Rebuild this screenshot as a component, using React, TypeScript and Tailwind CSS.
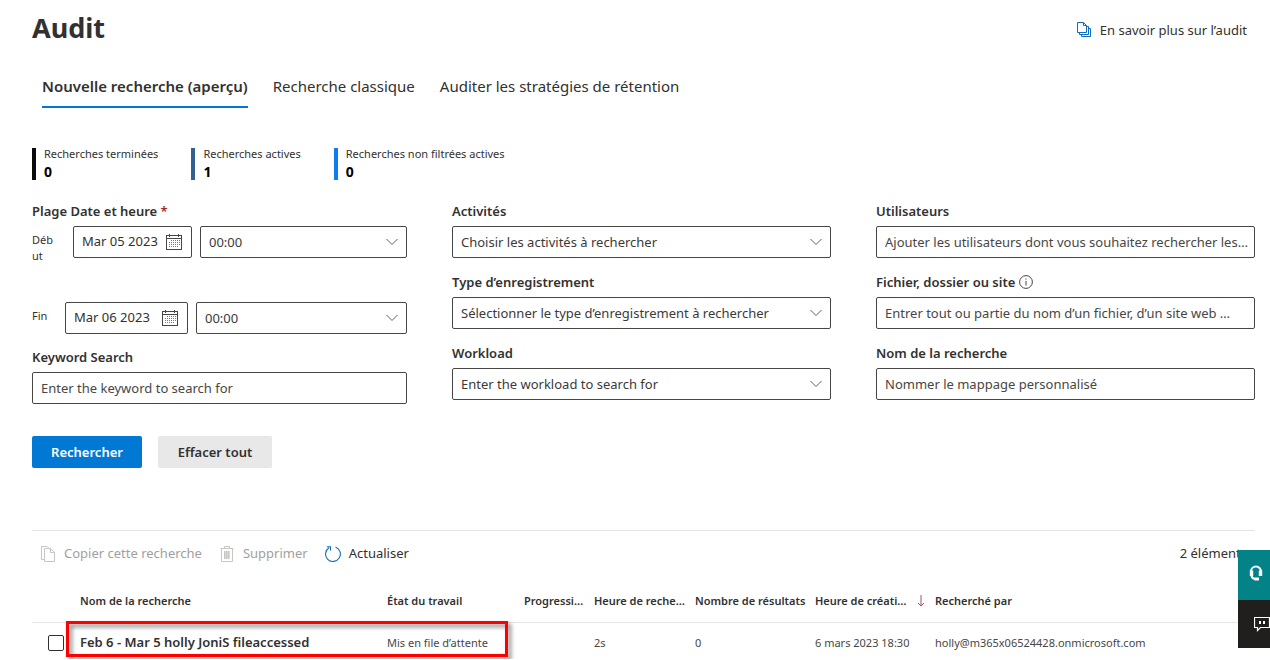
import type { ReactNode } from "react";

const control =
  "h-8 w-full min-w-0 rounded-xs border border-[#484644] bg-white pl-2 text-[13px] text-[#3b3a39] placeholder:text-[#484644] placeholder:opacity-100 text-ellipsis";

const labelText = "text-[13px] leading-5 font-semibold text-[#323130]";

function Chevron() {
  return (
    <svg className="pointer-events-none absolute top-2.5 right-[9px] h-3 w-3" viewBox="0 0 12 12" fill="none" stroke="#605e5c" aria-hidden="true">
      <path d="M0.5 3L6 8.5L11.5 3" />
    </svg>
  );
}

function Calendar() {
  return (
    <svg className="h-4 w-4 shrink-0" viewBox="0 0 16 16" fill="none" stroke="#484644" shapeRendering="crispEdges" aria-hidden="true">
      <path d="M0.5 1.5H15.5V15.5H0.5Z M0.5 4.5H15.5 M3.5 0V3 M12.5 0V3" />
      <path
        d="M5 6.5H14 M3 8.5H14 M3 10.5H14 M3 12.5H12"
        stroke="#797775"
        strokeDasharray="1 1"
      />
    </svg>
  );
}

function Select({ id, value, label }: { id: string; value: string; label?: string }) {
  return (
    <div className="relative min-w-0 flex-1">
      <select id={id} aria-label={label} className={`${control} appearance-none pt-0.5 pr-7`}>
        <option>{value}</option>
      </select>
      <Chevron />
    </div>
  );
}

function Field({ id, label, extra, children }: { id: string; label: string; extra?: ReactNode; children: ReactNode }) {
  return (
    <div className="flex flex-col gap-[5px]">
      <div className="flex items-center gap-1">
        <label htmlFor={id} className={labelText}>
          {label}
        </label>
        {extra}
      </div>
      <div className="flex">{children}</div>
    </div>
  );
}

function DateInput({ id, value }: { id: string; value: string }) {
  return (
    <div className="flex h-8 min-w-0 items-center rounded-xs border border-[#484644] pr-[9px] pl-2">
      <input id={id} defaultValue={value} className="w-0 min-w-0 flex-1 text-[13px] text-[#323130]" />
      <Calendar />
    </div>
  );
}

function Stat({ label, value, bar }: { label: string; value: string; bar: string }) {
  return (
    <div className={`h-8 border-l-4 pl-2 ${bar}`}>
      <dt className="text-[11px] leading-3 text-[#323130]">{label}</dt>
      <dd className="pt-0.5 text-sm leading-5 font-bold text-black">{value}</dd>
    </div>
  );
}

const stats = [
  { label: "Recherches terminées", value: "0", bar: "border-[#0b0b0b]" },
  { label: "Recherches actives", value: "1", bar: "border-[#32608f]" },
  { label: "Recherches non filtrées actives", value: "0", bar: "border-[#0f7cec]" },
];

export default function App() {
  return (
    <div className="relative overflow-hidden bg-white pr-[15px] pl-8 font-['Noto_Sans','Open_Sans',sans-serif] text-[#323130]">
      <header className="flex h-[60px] items-center justify-between pr-2">
        <h1 className="pb-1 text-[27px] leading-9 font-bold">Audit</h1>
        <a href="#savoir" className="flex items-center gap-2 text-[13px] leading-5">
          <svg className="h-4 w-4" viewBox="0 0 16 16" fill="none" stroke="#0f6cbd" aria-hidden="true">
            <path d="M1.5 0.5H7.5L10.5 3.5V10.5H1.5Z M7.5 0.5V3.5H10.5 M3.5 10.5V12.5H12.5V4.5H10.5 M5.5 12.5V14.5H14.5V6.5H12.5" />
          </svg>
          En savoir plus sur l’audit
        </a>
      </header>

      <nav className="flex h-12 items-stretch gap-[25px] pl-2.5 text-[15px] leading-[22px]">
        <a href="#nouvelle" aria-current="page" className="border-b-2 border-[#0078d4] pt-[15px] font-semibold">
          Nouvelle recherche (aperçu)
        </a>
        <a href="#classique" className="pt-[15px]">
          Recherche classique
        </a>
        <a href="#retention" className="pt-[15px]">
          Auditer les stratégies de rétention
        </a>
      </nav>

      <dl className="flex gap-[33px] pt-10">
        {stats.map((s) => (
          <Stat key={s.label} {...s} />
        ))}
      </dl>

      <form onSubmit={(e) => e.preventDefault()} className="pt-[21px]">
        <div className="grid grid-cols-[minmax(0,375fr)_minmax(0,379fr)_minmax(0,379fr)] gap-x-[45px]">
          <div>
            <fieldset>
              <legend className={labelText}>
                Plage Date et heure <span className="text-[#a4262c]">*</span>
              </legend>
              <div className="mt-[5px] grid h-[76px] grid-cols-[33px_119px_minmax(0,1fr)] gap-2">
                <label htmlFor="debut" className="w-6 pt-1.5 text-[11px] leading-4 break-all">
                  Début
                </label>
                <DateInput id="debut" value="Mar 05 2023" />
                <Select id="debut-heure" label="Heure de début" value="00:00" />
              </div>
              <div className="grid grid-cols-[25px_123px_minmax(0,1fr)] gap-2 pb-[13px]">
                <label htmlFor="fin" className="pt-1.5 text-[11px] leading-4">
                  Fin
                </label>
                <DateInput id="fin" value="Mar 06 2023" />
                <Select id="fin-heure" label="Heure de fin" value="00:00" />
              </div>
            </fieldset>
            <Field id="keyword" label="Keyword Search">
              <input id="keyword" placeholder="Enter the keyword to search for" className={`${control} pr-2`} />
            </Field>
          </div>

          <div className="flex flex-col gap-[14px]">
            <Field id="activites" label="Activités">
              <Select id="activites" value="Choisir les activités à rechercher" />
            </Field>
            <Field id="type" label="Type d’enregistrement">
              <Select id="type" value="Sélectionner le type d’enregistrement à rechercher" />
            </Field>
            <Field id="workload" label="Workload">
              <Select id="workload" value="Enter the workload to search for" />
            </Field>
          </div>

          <div className="flex flex-col gap-[14px]">
            <Field id="utilisateurs" label="Utilisateurs">
              <input
                id="utilisateurs"
                placeholder="Ajouter les utilisateurs dont vous souhaitez rechercher les journaux"
                className={`${control} pr-1`}
              />
            </Field>
            <Field
              id="fichier"
              label="Fichier, dossier ou site"
              extra={
                <svg className="h-3.5 w-3.5" viewBox="0 0 14 14" fill="none" stroke="#484644" aria-hidden="true">
                  <circle cx="7" cy="7" r="6.4" />
                  <path d="M7 3.5V4.7 M7 6V10.5" />
                </svg>
              }
            >
              <input
                id="fichier"
                placeholder="Entrer tout ou partie du nom d’un fichier, d’un site web ou d’un dossier"
                className={`${control} pr-5`}
              />
            </Field>
            <Field id="nom" label="Nom de la recherche">
              <input id="nom" placeholder="Nommer le mappage personnalisé" className={`${control} pr-2`} />
            </Field>
          </div>
        </div>

        <div className="flex gap-4 pt-8 text-[13px] font-semibold">
          <button type="submit" className="h-8 w-[110px] rounded-xs bg-[#0078d4] pt-0.5 text-white">
            Rechercher
          </button>
          <button type="reset" className="h-8 w-[114px] rounded-xs bg-[#e8e8e8] pt-0.5">
            Effacer tout
          </button>
        </div>
      </form>

      <section className="mt-[62px] border-t border-[#e5e5e5]">
        <div className="flex h-[46px] items-center justify-between pr-2 pl-2 text-[13px]">
          <div className="flex gap-[17px]">
            <button disabled className="flex items-center gap-2 text-[#a19f9d]">
              <svg className="h-4 w-4" viewBox="0 0 16 16" fill="none" stroke="#c8c6c4" aria-hidden="true">
                <path d="M4.5 13.5H1.5V0.5H7L9.5 3" />
                <path d="M4.5 2.5H10.5L14.5 6.5V15.5H4.5Z M10.5 2.5V6.5H14.5" />
              </svg>
              Copier cette recherche
            </button>
            <button disabled className="flex items-center gap-2 text-[#a19f9d]">
              <svg className="h-4 w-4" viewBox="0 0 16 16" fill="none" stroke="#c8c6c4" aria-hidden="true">
                <path d="M1.5 2.5H14.5 M5.5 2.5V0.5H10.5V2.5 M2.5 2.5V15.5H13.5V2.5" />
                <path d="M5 5H11V13H5Z" fill="#dddbd9" stroke="none" />
                <path d="M5.5 5V13 M7.5 5V13 M9.5 5V13" />
              </svg>
              Supprimer
            </button>
            <button className="flex items-center gap-2">
              <svg className="h-4 w-4" viewBox="0 0 16 16" fill="none" stroke="#0f6cbd" strokeWidth="1.1" aria-hidden="true">
                <path d="M10.5 1.1A7.4 7.4 0 1 1 4 1.8 M1.8 0.8H5.5V4.5" />
              </svg>
              Actualiser
            </button>
          </div>
          <span>2 éléments</span>
        </div>

        <div className="relative">
          <table className="w-full table-fixed text-left">
            <colgroup>
              <col className="w-10" />
              <col className="w-[307px]" />
              <col className="w-[137px]" />
              <col className="w-[70px]" />
              <col className="w-[101px]" />
              <col className="w-[120px]" />
              <col className="w-[120px]" />
              <col />
            </colgroup>
            <thead>
              <tr className="h-[45px] border-b border-[#e5e5e5] text-[11px] [&>th]:truncate [&>th]:pt-1 [&>th]:pl-2 [&>th]:font-semibold">
                <th aria-label="Sélection" />
                <th>Nom de la recherche</th>
                <th>État du travail</th>
                <th>Progression</th>
                <th>Heure de recherche</th>
                <th>Nombre de résultats</th>
                <th aria-sort="descending">
                  <span className="flex items-center gap-2">
                    <span className="w-[94px] truncate">Heure de création</span>
                    <svg className="h-3 w-2 shrink-0" viewBox="0 0 8 12" fill="none" stroke="#a4525a" aria-hidden="true">
                      <path d="M4 0V11 M1 8L4 11L7 8" />
                    </svg>
                  </span>
                </th>
                <th>Recherché par</th>
              </tr>
            </thead>
            <tbody>
              <tr className="h-[37px] text-[11px] text-[#484644] [&>td]:pt-1 [&>td]:pl-2 [&>td]:whitespace-nowrap">
                <td>
                  <input
                    type="checkbox"
                    aria-label="Sélectionner la ligne"
                    className="ml-2 block h-4 w-4 appearance-none rounded-xs border border-[#323130] bg-white"
                  />
                </td>
                <td className="text-[13px] font-semibold text-[#323130]">Feb 6 - Mar 5 holly JoniS fileaccessed</td>
                <td>Mis en file d’attente</td>
                <td />
                <td>2s</td>
                <td>0</td>
                <td>6 mars 2023 18:30</td>
                <td>holly@m365x06524428.onmicrosoft.com</td>
              </tr>
            </tbody>
          </table>
          <div className="pointer-events-none absolute top-11 left-[34px] h-9 w-[442px] border-3 border-[#fe0000] drop-shadow-[3px_3px_2px_rgba(0,0,0,0.5)]" />
        </div>
      </section>

      <aside className="absolute top-[550px] right-0 w-8">
        <button aria-label="Aide" className="flex h-[50px] w-8 items-center justify-center bg-[#038387] pb-1 pl-1">
          <svg className="h-4 w-4" viewBox="0 0 16 16" fill="none" stroke="white" strokeWidth="2" aria-hidden="true">
            <path d="M3 8V6.5A5 5 0 0 1 13 6.5V8" />
            <path d="M3.5 5.5V11 M12.5 5.5V11" strokeWidth="3.4" />
            <path d="M3.5 10.5Q4 14 8 14" strokeWidth="2" />
            <path d="M6.5 14H11" strokeWidth="3" />
          </svg>
        </button>
        <button aria-label="Commentaires" className="flex h-12 w-8 items-center overflow-hidden bg-[#201f1e] pl-4">
          <svg className="h-4 w-4 shrink-0" viewBox="0 0 16 16" fill="none" stroke="white" aria-hidden="true">
            <path d="M0.5 1.5H15.5V11.5H6.5L3.5 14.5V11.5H0.5Z" strokeWidth="1.2" />
            <path d="M5 5H7V8H5Z M9 5H11V8H9Z" fill="white" stroke="none" />
          </svg>
        </button>
      </aside>
    </div>
  );
}
